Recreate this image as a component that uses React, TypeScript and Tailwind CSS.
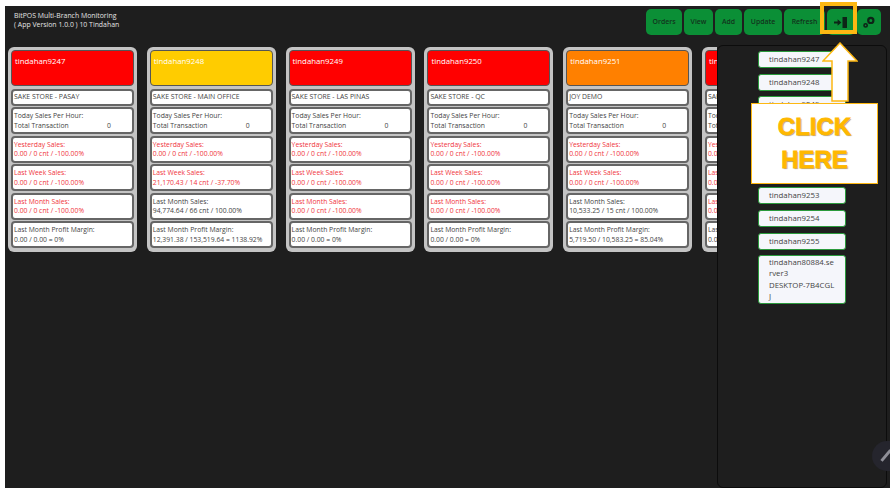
import React from "react";

type Row = { a: string; b: string; red?: boolean };
type Card = { name: string; color: string; store: string; rows: Row[] };

const z = "0.00 / 0 cnt / -100.00%";
const y: Row = { a: "Yesterday Sales:", b: z, red: true };
const w: Row = { a: "Last Week Sales:", b: z, red: true };
const m: Row = { a: "Last Month Sales:", b: z, red: true };
const p: Row = { a: "Last Month Profit Margin:", b: "0.00 / 0.00 = 0%" };

const cards: Card[] = [
  { name: "tindahan9247", color: "bg-[#ff0000]", store: "SAKE STORE - PASAY", rows: [y, w, m, p] },
  {
    name: "tindahan9248",
    color: "bg-[#ffcc00]",
    store: "SAKE STORE - MAIN OFFICE",
    rows: [
      y,
      { a: "Last Week Sales:", b: "21,170.43 / 14 cnt / -37.70%", red: true },
      { a: "Last Month Sales:", b: "94,774.64 / 66 cnt / 100.00%" },
      { a: "Last Month Profit Margin:", b: "12,391.38 / 153,519.64 = 1138.92%" },
    ],
  },
  { name: "tindahan9249", color: "bg-[#ff0000]", store: "SAKE STORE - LAS PINAS", rows: [y, w, m, p] },
  { name: "tindahan9250", color: "bg-[#ff0000]", store: "SAKE STORE - QC", rows: [y, w, m, p] },
  {
    name: "tindahan9251",
    color: "bg-[#ff8000]",
    store: "JOY DEMO",
    rows: [
      y,
      w,
      { a: "Last Month Sales:", b: "10,533.25 / 15 cnt / 100.00%" },
      { a: "Last Month Profit Margin:", b: "5,719.50 / 10,583.25 = 85.04%" },
    ],
  },
  { name: "tindahan9252", color: "bg-[#ff0000]", store: "SAKE STORE", rows: [y, w, m, p] },
];

const list = [
  "tindahan9247",
  "tindahan9248",
  "tindahan9249",
  "tindahan9250",
  "tindahan9251",
  "tindahan9252",
  "tindahan9253",
  "tindahan9254",
  "tindahan9255",
];

function Box({ children, red }: { children: React.ReactNode; red?: boolean }) {
  return (
    <div
      className={`h-[27px] rounded-[4px] border-2 border-[#666] bg-white pl-[1px] text-[6.8px] leading-[9.5px] pt-[2px] whitespace-nowrap overflow-hidden ${
        red ? "text-[#f0343c]" : "text-[#444]"
      }`}
    >
      {children}
    </div>
  );
}

function StoreCard({ c }: { c: Card }) {
  return (
    <div className="w-[129px] shrink-0 h-[205px] rounded-[6px] bg-[#c4c4c4] p-[3px] flex flex-col gap-[1.5px]">
      <div className={`h-[36px] rounded-[4px] border border-[#555] ${c.color} text-white text-[7.8px] pl-[3px] pt-[4px] leading-[12px]`}>
        {c.name}
      </div>
      <div className="h-[17px] mt-[1px] rounded-[4px] border-2 border-[#666] bg-white pl-[1px] text-[6.9px] leading-[12px] text-[#444] whitespace-nowrap overflow-hidden">
        {c.store}
      </div>
      <Box>
        <div>Today Sales Per Hour:</div>
        <div className="flex">
          <span className="w-[93px]">Total Transaction</span>
          <span>0</span>
        </div>
      </Box>
      {c.rows.map((r) => (
        <Box key={r.a} red={r.red}>
          <div>{r.a}</div>
          <div>{r.b}</div>
        </Box>
      ))}
    </div>
  );
}

function Btn({ children, w }: { children: React.ReactNode; w: string }) {
  return (
    <div className={`${w} h-[26px] rounded-[5px] bg-[#0b8f36] flex items-center justify-center text-[6.9px] font-semibold text-[#12331d]`}>
      {children}
    </div>
  );
}

export default function App() {
  return (
    <div className="w-[896px] h-[494px] bg-white pl-[5px] pr-[6px] pt-[6px] pb-[6px] font-['Open_Sans',sans-serif]">
      <div className="relative w-full h-full bg-[#1e1e1e]">
        <div className="flex justify-between h-[39px]">
          <div className="pl-[9px] pt-[5px] text-[6.9px] leading-[9px] text-[#e4e4e4]">
            <div>BitPOS Multi-Branch Monitoring</div>
            <div>( App Version 1.0.0 ) 10 Tindahan</div>
          </div>
          <div className="flex gap-[2px] pt-[3px] pr-[9px]">
            <Btn w="w-[36px]">Orders</Btn>
            <Btn w="w-[29px]">View</Btn>
            <Btn w="w-[27px]">Add</Btn>
            <Btn w="w-[38px]">Update</Btn>
            <Btn w="w-[41px]">Refresh</Btn>
            <Btn w="w-[28px]">
              <svg className="mr-[2px]" width="13" height="11" viewBox="0 0 13 11">
                <path d="M8.5 0H13v11H8.5z M0 4.4h3.6V2.2L7.4 5.5 3.6 8.8V6.6H0z" fill="#0d2417" />
              </svg>
            </Btn>
            <Btn w="w-[24px]">
              <svg width="12" height="12" viewBox="0 0 12 12">
                <circle cx="7.8" cy="4.4" r="2.6" fill="none" stroke="#0d2417" strokeWidth="2.2" />
                <circle cx="2.6" cy="9.4" r="1.6" fill="none" stroke="#0d2417" strokeWidth="1.6" />
              </svg>
            </Btn>
          </div>
        </div>

        <div className="flex gap-[9.8px] pl-[3px] pt-[2px] w-[712px] overflow-hidden">
          {cards.map((c) => (
            <StoreCard key={c.name} c={c} />
          ))}
        </div>

        <div className="absolute left-[712px] top-[39px] bottom-0 right-[3px] rounded-[6px] border border-[#0c0c0c] bg-[#1e1e1e] pt-[5px] flex flex-col items-center gap-[5.7px]">
          {list.map((n) => (
            <div key={n} className="w-[88px] h-[17px] shrink-0 rounded-[3px] border border-[#2a9a3c] bg-[#f5f6fb] pl-[10px] text-[7.8px] leading-[14px] text-[#444]">
              {n}
            </div>
          ))}
          <div className="w-[88px] shrink-0 rounded-[3px] border border-[#2a9a3c] bg-[#f5f6fb] pl-[10px] pt-[1px] pb-[1px] text-[7.8px] leading-[11.3px] text-[#444] whitespace-nowrap">
            <div>tindahan80884.se</div>
            <div>rver3</div>
            <div>DESKTOP-7B4CGL</div>
            <div>J</div>
          </div>
        </div>

        <div className="absolute right-0 top-[435px] w-[18px] h-[30px] rounded-l-full bg-[#25252d] overflow-hidden">
          <div className="absolute left-[7px] top-[13px] w-[14px] h-[3px] bg-[#8f8f98] rotate-[-50deg]" />
        </div>

        {/* tutorial overlays */}
        <div className="absolute left-[815px] top-[-4px] w-[37px] h-[32px] border-[4px] border-[#fdb813]" />
        <svg className="absolute left-[817px] top-[36px]" width="36" height="60" viewBox="0 0 36 60">
          <path d="M18 1 L35 19 H26 V59 H10 V19 H1 Z" fill="#fff" stroke="#fdb813" strokeWidth="1.5" />
        </svg>
        <div className="absolute left-[746px] top-[97px] w-[127px] h-[81px] bg-white border border-[#fdb813] flex flex-col items-center justify-center gap-[3px] font-['Liberation_Sans',sans-serif] font-bold text-[#ffb800] text-[24px] leading-[30px] [-webkit-text-stroke:0.8px_#ffb800] [text-shadow:1px_1px_1px_#999]">
          <div>CLICK</div>
          <div>HERE</div>
        </div>
      </div>
    </div>
  );
}
